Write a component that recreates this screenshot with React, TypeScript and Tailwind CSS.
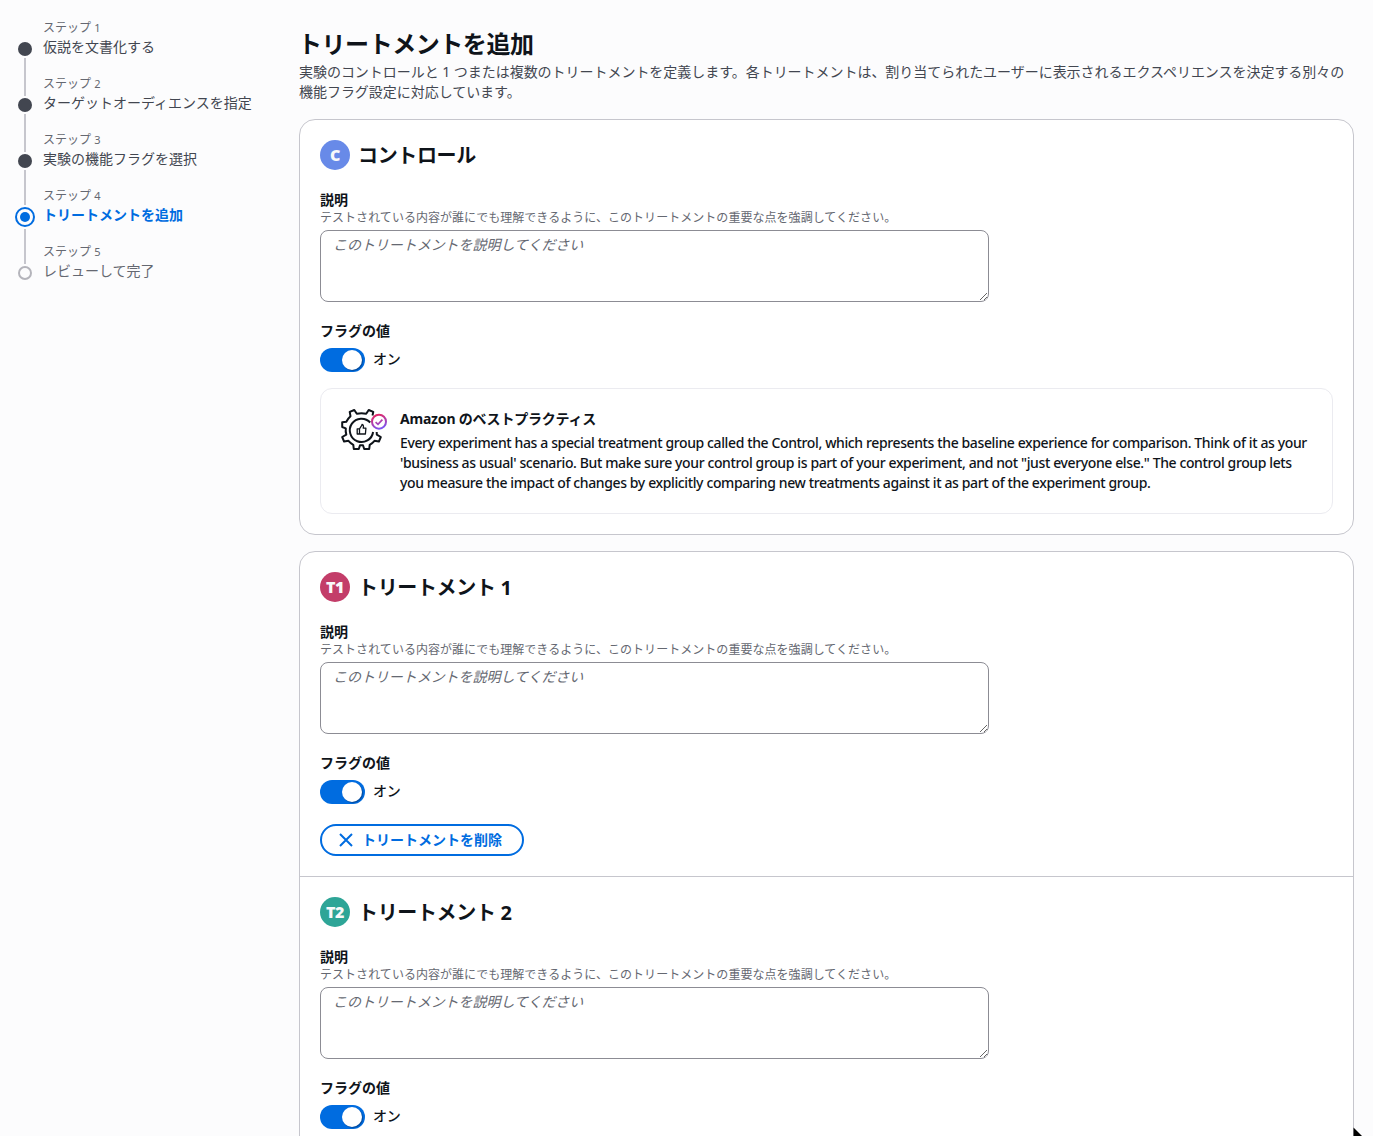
import React from 'react';

type StepStatus = 'visited' | 'active' | 'unvisited';

interface Step {
  title: string;
  status: StepStatus;
}

interface Treatment {
  badge: string;
  badgeClass: string;
  title: string;
  removable?: boolean;
}

const STEPS: Step[] = [
  { title: '仮説を文書化する', status: 'visited' },
  { title: 'ターゲットオーディエンスを指定', status: 'visited' },
  { title: '実験の機能フラグを選択', status: 'visited' },
  { title: 'トリートメントを追加', status: 'active' },
  { title: 'レビューして完了', status: 'unvisited' },
];

const CONTROL: Treatment = { badge: 'C', badgeClass: 'bg-[#688ae8]', title: 'コントロール' };

const TREATMENTS: Treatment[] = [
  { badge: 'T1', badgeClass: 'bg-[#c33d69]', title: 'トリートメント 1', removable: true },
  { badge: 'T2', badgeClass: 'bg-[#2ea597]', title: 'トリートメント 2' },
];

const TITLE_CLASSES: Record<StepStatus, string> = {
  visited: 'text-[#424650]',
  active: 'font-bold text-[#006ce0]',
  unvisited: 'text-[#656871]',
};

const StepMarker: React.FC<{ status: StepStatus }> = ({ status }) => {
  if (status === 'active') {
    return (
      <div className="flex size-5 shrink-0 items-center justify-center rounded-full border-2 border-[#006ce0]">
        <div className="size-2.5 rounded-full bg-[#006ce0]" />
      </div>
    );
  }
  if (status === 'unvisited') {
    return <div className="my-[3px] size-3.5 shrink-0 rounded-full border-2 border-[#b4b4bb]" />;
  }
  return <div className="my-[3px] size-3.5 shrink-0 rounded-full bg-[#424650]" />;
};

const WizardSteps: React.FC = () => (
  <nav className="w-[299px] shrink-0 pl-[15px] pt-[19px]">
    <ol>
      {STEPS.map((step, index) => (
        <li key={step.title} className="flex h-14 gap-2">
          <div className="flex w-5 flex-col items-center pt-5">
            <StepMarker status={step.status} />
            {index < STEPS.length - 1 && (
              <div
                className={
                  STEPS[index + 1].status === 'active'
                    ? '-mt-px -mb-[16px] h-[35px] w-0.5 shrink-0 bg-[#c6c6cd]'
                    : step.status === 'active'
                      ? 'mt-0.5 -mb-[21px] h-[35px] w-0.5 shrink-0 bg-[#c6c6cd]'
                      : '-mt-px -mb-[21px] h-[38px] w-0.5 shrink-0 bg-[#c6c6cd]'
                }
              />
            )}
          </div>
          <div>
            <div className="pt-px text-xs leading-4 text-[#656871]">
              ステップ <span className="text-[11px]">{index + 1}</span>
            </div>
            <div className={`mt-px whitespace-nowrap text-sm leading-5 ${TITLE_CLASSES[step.status]}`}>
              {step.title}
            </div>
          </div>
        </li>
      ))}
    </ol>
  </nav>
);

const BestPracticeIcon: React.FC = () => (
  <svg width="48" height="44" viewBox="0 0 48 44" fill="none" className="-mt-px shrink-0">
    <defs>
      <linearGradient id="badge" x1="36" y1="6" x2="41" y2="21" gradientUnits="userSpaceOnUse">
        <stop stopColor="#e8255f" />
        <stop offset="1" stopColor="#7a55f5" />
      </linearGradient>
    </defs>
    <g stroke="#0f141a" strokeWidth="2" strokeLinejoin="round">
      <path d="M32.5 7.5L33.3 3.9L28.7 2L26.2 5.8Q21.5 4.9 16.8 5.8L14.3 2L9.7 3.9L10.5 8.3Q7.9 10.6 6.3 13.8L2.2 14.3V19L5.8 20.4Q5.4 23.4 6.3 26.6L2.2 29L4.1 33.6L8.5 32.8Q10.5 35.2 13.3 36.8L13.8 41H18.8L20 37.2H23L24.2 41H29.2L29.7 36.8Q32.5 35.2 34.5 32.8L38.9 33.6L40.8 29L36.8 26.6L36.7 24" />
      <path d="M30.2 14.5A11.7 11.7 0 1 0 33.1 24" />
    </g>
    <g stroke="#0f141a" strokeWidth="1.3" strokeLinejoin="round">
      <path d="M17.2 20.8H19.5V26H17.2ZM19.5 20.8L22 17V16.5Q24.1 17 23.2 20.2H25.9L25.4 26H19.5" />
    </g>
    <circle cx="39" cy="13.7" r="7" stroke="url(#badge)" strokeWidth="2" />
    <path d="M35.6 14.1L38 16.3L42.4 11.6" stroke="url(#badge)" strokeWidth="1.7" />
  </svg>
);

const Toggle: React.FC = () => (
  <div className="flex h-6 items-center gap-2">
    <div className="flex h-6 w-[45px] items-center justify-end rounded-full bg-[#006ce0] pr-[3px]">
      <div className="size-5 rounded-full bg-white shadow-[1px_1px_1px_rgba(0,7,22,0.35)]" />
    </div>
    <span className="-mt-[3px] text-sm font-medium leading-5 tracking-[-0.2px]">オン</span>
  </div>
);

const TreatmentFields: React.FC<{ treatment: Treatment }> = ({ treatment }) => (
  <>
    <div className="flex items-center gap-2">
      <div
        className={`flex size-[30px] items-center justify-center rounded-full text-base font-black tracking-[-0.3px] text-[#f9f9fa] ${treatment.badgeClass}`}
      >
        {treatment.badge}
      </div>
      <h2 className="pt-0.5 text-xl font-bold leading-6 tracking-[-0.35px]">{treatment.title}</h2>
    </div>
    <div className="mt-5 text-sm font-bold leading-5">説明</div>
    <div className="text-xs leading-4 tracking-[0.04px] text-[#656871]">
      テストされている内容が誰にでも理解できるように、このトリートメントの重要な点を強調してください。
    </div>
    <textarea
      className="mt-1 block h-[72px] w-[669px] resize rounded-lg border border-[#8c8c94] bg-white px-3 py-1 text-sm leading-5 tracking-[-0.05px] placeholder:italic placeholder:text-[#656871]"
      placeholder="このトリートメントを説明してください"
    />
    <div className="mt-[19px] mb-[7px] text-sm font-bold leading-5">フラグの値</div>
    <Toggle />
  </>
);

const RemoveButton: React.FC = () => (
  <button className="mt-5 flex h-8 w-[204px] items-center gap-2 rounded-full border-2 border-[#006ce0] pl-4 text-sm font-bold leading-5 text-[#006ce0]">
    <svg width="16" height="16" viewBox="0 0 16 16" stroke="currentColor" strokeWidth="2">
      <path d="M2 2l12 12M14 2L2 14" />
    </svg>
    トリートメントを削除
  </button>
);

const App: React.FC = () => (
  <div className="relative flex h-[1136px] w-[1373px] overflow-hidden bg-[#fcfcfd] font-['Noto_Sans','Noto_Sans_CJK_JP',sans-serif] text-[#0f141a]">
    <WizardSteps />
    <main className="w-[1055px] shrink-0 pt-[29px]">
      <h1 className="-ml-px text-2xl font-bold leading-[30px] tracking-[-0.45px]">トリートメントを追加</h1>
      <p className="mt-[3px] whitespace-nowrap text-sm leading-5 tracking-[-0.035px] text-[#424650]">
        実験のコントロールと 1 つまたは複数のトリートメントを定義します。各トリートメントは、割り当てられたユーザーに表示されるエクスペリエンスを決定する別々の
        <br />
        機能フラグ設定に対応しています。
      </p>

      <section className="mt-[17px] rounded-2xl border border-[#c6c6cd] bg-white p-5">
        <TreatmentFields treatment={CONTROL} />
        <div className="mt-4 flex h-[126px] gap-3 rounded-xl border border-[#ebebf0] pl-[19px] pt-5">
          <BestPracticeIcon />
          <div className="text-sm leading-5">
            <div className="font-bold tracking-[-0.2px]">Amazon のベストプラクティス</div>
            <p className="mt-1 whitespace-nowrap font-medium tracking-[-0.38px]">
              Every experiment has a special treatment group called the Control, which represents the baseline experience for comparison. Think of it as your
              <br />
              'business as usual' scenario. But make sure your control group is part of your experiment, and not "just everyone else." The control group lets
              <br />
              you measure the impact of changes by explicitly comparing new treatments against it as part of the experiment group.
            </p>
          </div>
        </div>
      </section>

      <section className="mt-4 rounded-2xl border border-[#c6c6cd] bg-white">
        {TREATMENTS.map((treatment) => (
          <div key={treatment.badge} className="border-b border-[#c6c6cd] p-5 last:border-b-0 last:pb-16">
            <TreatmentFields treatment={treatment} />
            {treatment.removable && <RemoveButton />}
          </div>
        ))}
      </section>
    </main>

    {/* mouse pointer */}
    <svg className="absolute left-[1353px] top-[1127px]" width="12" height="9" viewBox="0 0 12 9">
      <path d="M0.5 0.5V9H9Z" fill="#000" />
    </svg>
  </div>
);

export default App;
